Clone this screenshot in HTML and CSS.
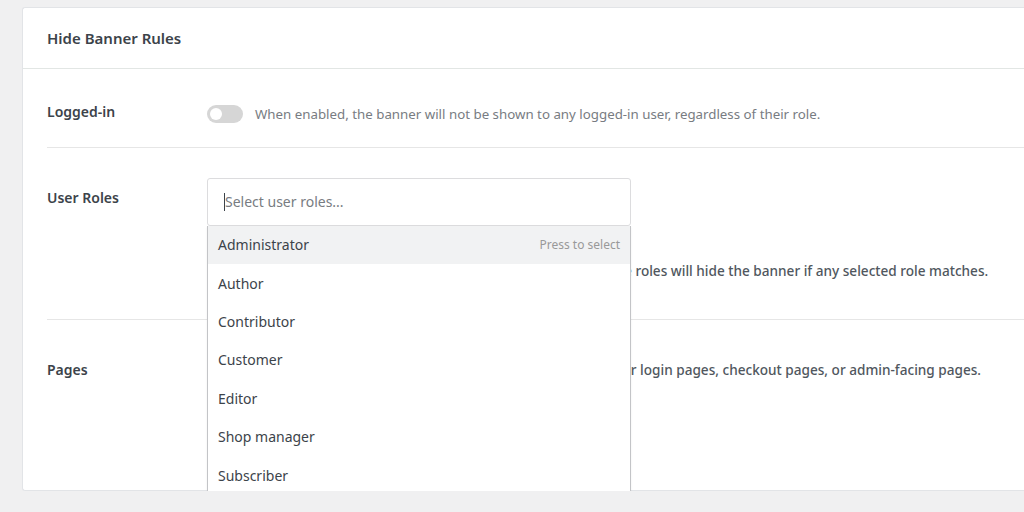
FILE: index.html
```html
<!DOCTYPE html>
<html lang="en">
<head>
    <meta charset="UTF-8">
    <title>Hide Banner Rules</title>
    <link rel="stylesheet" href="styles.css">
</head>
<body>
    <div class="card">
        <div class="card-header">Hide Banner Rules</div>

        <div class="card-body">
            <!-- Logged-in toggle -->
            <div class="row row-logged">
                <div class="row-label">Logged-in</div>
                <div class="row-control inline">
                    <span class="toggle"><span class="knob"></span></span>
                    <span class="hint">When enabled, the banner will not be shown to any logged-in user, regardless of their role.</span>
                </div>
            </div>

            <!-- User roles multiselect (open) -->
            <div class="row row-roles">
                <div class="row-label">User Roles</div>
                <div class="row-control">
                    <div class="select-wrap">
                        <div class="select-input"><span class="caret"></span><span class="placeholder">Select user roles...</span></div>
                        <ul class="select-menu">
                            <li class="active">Administrator <span class="press">Press to select</span></li>
                            <li>Author</li>
                            <li>Contributor</li>
                            <li>Customer</li>
                            <li>Editor</li>
                            <li>Shop manager</li>
                            <li>Subscriber</li>
                        </ul>
                    </div>
                    <p class="desc desc-roles">Select the user roles which should never see it. Choosing multiple roles will hide the banner if any selected role matches.</p>
                </div>
            </div>

            <!-- Pages -->
            <div class="row row-pages">
                <div class="row-label">Pages</div>
                <div class="row-control">
                    <p class="desc desc-pages">Choose the pages where the banner must be hidden, such as your login pages, checkout pages, or admin-facing pages.</p>
                </div>
            </div>
        </div>
    </div>
</body>
</html>
```

FILE: styles.css
```css
body {
    margin: 7px 0 0 22px;
    background-color: #f0f0f1;
    font-family: "Noto Sans", "Open Sans", sans-serif;
    color: #3c434a;
}
.card {
    height: 484px;
    background-color: #fff;
    border: 1px solid #e2e4e7;
    border-right: none;
    border-radius: 3px 0 0 3px;
    box-sizing: border-box;
}
.card-header {
    height: 60px;
    padding: 0 24px;
    display: flex;
    align-items: center;
    font-size: 15px;
    font-weight: 600;
    color: #3c434a;
    border-bottom: 1px solid #e2e6e4;
}
.card-body {
    padding-left: 24px;
}
.row {
    display: flex;
    align-items: flex-start;
    border-bottom: 1px solid #e6e6e6;
}
.row:last-child {
    border-bottom: none;
}
.row-label {
    width: 160px;
    flex-shrink: 0;
    font-size: 14px;
    font-weight: 600;
    color: #3c434a;
    line-height: 20px;
}
.row-control {
    flex: 1;
    font-size: 14px;
    line-height: 20px;
}
.inline {
    display: flex;
    align-items: center;
}
.row-logged {
    height: 79px;
    box-sizing: border-box;
    padding-top: 33px;
}
.row-logged .row-control {
    margin-top: 2px;
}
.toggle {
    width: 36px;
    height: 18px;
    border-radius: 9px;
    background-color: #d6d6d6;
    position: relative;
    margin-right: 12px;
    flex-shrink: 0;
}
.knob {
    position: absolute;
    left: 3px;
    top: 3px;
    width: 12px;
    height: 12px;
    border-radius: 50%;
    background-color: #fff;
}
.hint {
    color: #787c82;
    font-size: 13.3px;
}
.row-roles {
    height: 172px;
    box-sizing: border-box;
    padding-top: 30px;
}
.row-roles .row-label {
    padding-top: 10px;
}
.select-wrap {
    width: 424px;
    position: relative;
}
.select-input {
    height: 48px;
    box-sizing: border-box;
    border: 1px solid #dcdcde;
    border-radius: 3px;
    display: flex;
    align-items: center;
    padding-left: 16px;
    font-size: 14px;
    color: #787c82;
}
.caret {
    width: 1px;
    height: 18px;
    background-color: #3c434a;
}
.select-menu {
    position: absolute;
    top: 48px;
    left: 0;
    right: 0;
    margin: 0;
    padding: 0;
    list-style: none;
    background-color: #fff;
    border: 1px solid #c3c4c7;
    border-top: none;
    border-radius: 0 0 3px 3px;
    box-shadow: 0 1px 2px rgba(0, 0, 0, 0.08);
    z-index: 2;
}
.select-menu li {
    height: 38.4px;
    display: flex;
    align-items: center;
    justify-content: space-between;
    padding: 0 10px;
    font-size: 14px;
    color: #3c434a;
}
.select-menu li.active {
    background-color: #f1f2f3;
}
.press {
    font-size: 12px;
    color: #999;
}
.desc {
    margin: 0;
    font-size: 13.6px;
    font-weight: 500;
    color: #50575e;
}
.desc-roles {
    margin-top: 35px;
}
.row-pages {
    padding-top: 40px;
}
```
